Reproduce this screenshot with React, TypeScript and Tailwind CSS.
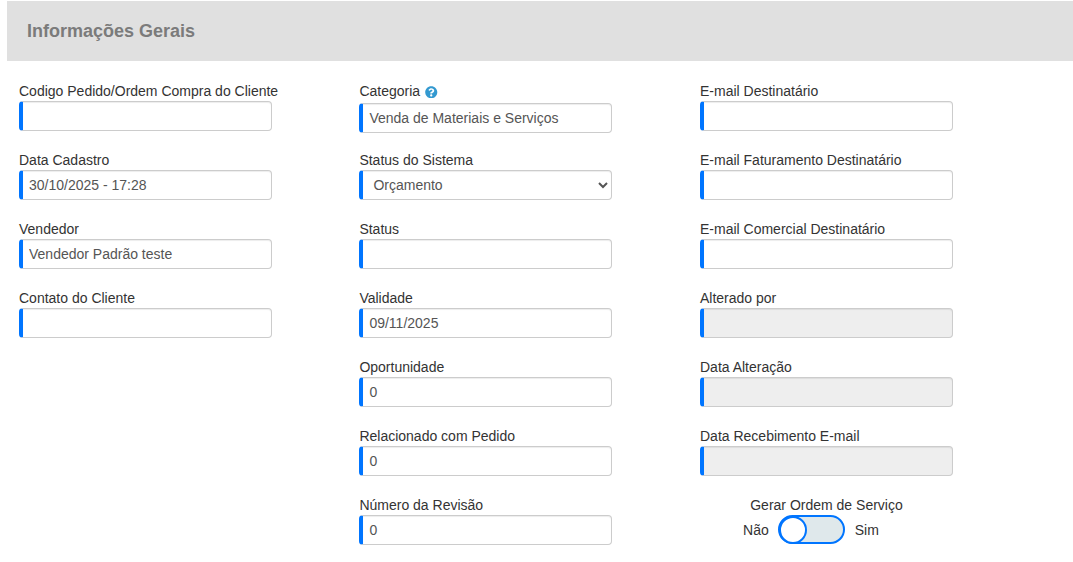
import { FaQuestionCircle } from "react-icons/fa";

type FieldProps = {
  label: string;
  value?: string;
  disabled?: boolean;
  help?: boolean;
};

const control =
  "block h-[30px] w-[253px] shrink-0 rounded-[4px] border border-l-4 border-[#ccc] border-l-[#0075ff] text-sm text-[#555] shadow-[inset_0_1px_1px_rgba(0,0,0,0.075)] outline-none";

function Field({ label, value = "", disabled, help }: FieldProps) {
  return (
    <label className="flex h-[69px] flex-col">
      <span className={`flex shrink-0 items-center whitespace-nowrap ${help ? "h-[22px] pb-0.5" : "h-5"}`}>
        {label}
        {help && <FaQuestionCircle className="mt-[2px] ml-[5px] size-[12.5px] text-[#3399d0]" />}
      </span>
      <input
        className={`${control} pr-3 pl-1.5 ${disabled ? "bg-[#eee]" : "bg-white"}`}
        defaultValue={value}
        readOnly={disabled}
      />
    </label>
  );
}

function SelectField({ label, value }: { label: string; value: string }) {
  return (
    <label className="flex h-[69px] flex-col">
      <span className="h-5 shrink-0 leading-5">{label}</span>
      <select className={`${control} bg-white pl-1.5`} defaultValue={value}>
        <option>{value}</option>
      </select>
    </label>
  );
}

function Toggle() {
  return (
    <div className="flex w-[253px] flex-col items-center leading-5">
      <span>Gerar Ordem de Serviço</span>
      <div className="mr-[31px] flex h-[30px] items-center">
        <span>Não</span>
        <span className="mr-[10px] mb-px ml-[9px] flex h-[29px] w-[67px] items-center rounded-full border-2 border-[#0075ff] bg-[#dfe8eb]">
          <span className="-ml-px size-[28px] shrink-0 rounded-full border-2 border-[#0075ff] bg-white" />
        </span>
        <span>Sim</span>
      </div>
    </div>
  );
}

export default function App() {
  return (
    <main className="h-[562px] overflow-hidden bg-white pt-px pl-[7px] font-['Liberation_Sans',Arial,sans-serif] text-sm text-[#333]">
      <header className="flex h-[60px] items-center bg-[#e0e0e0] pl-5">
        <h1 className="text-lg font-bold text-[#7b7b7b]">Informações Gerais</h1>
      </header>
      <div className="grid grid-cols-[340.4px_340.6px_253px] pt-5 pl-3">
        <section>
          <Field label="Codigo Pedido/Ordem Compra do Cliente" />
          <Field label="Data Cadastro" value="30/10/2025 - 17:28" />
          <Field label="Vendedor" value="Vendedor Padrão teste" />
          <Field label="Contato do Cliente" />
        </section>
        <section>
          <Field label="Categoria" value="Venda de Materiais e Serviços" help />
          <SelectField label="Status do Sistema" value="Orçamento" />
          <Field label="Status" />
          <Field label="Validade" value="09/11/2025" />
          <Field label="Oportunidade" value="0" />
          <Field label="Relacionado com Pedido" value="0" />
          <Field label="Número da Revisão" value="0" />
        </section>
        <section>
          <Field label="E-mail Destinatário" />
          <Field label="E-mail Faturamento Destinatário" />
          <Field label="E-mail Comercial Destinatário" />
          <Field label="Alterado por" disabled />
          <Field label="Data Alteração" disabled />
          <Field label="Data Recebimento E-mail" disabled />
          <Toggle />
        </section>
      </div>
    </main>
  );
}
